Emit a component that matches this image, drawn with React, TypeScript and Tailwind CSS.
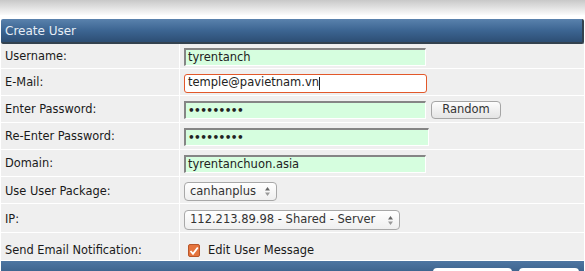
import React from "react"

const font = { fontFamily: '"DejaVu Sans", Verdana, sans-serif' }

function Row({
  label,
  children,
  h = "h-[26px]",
  pt = "pt-[2px]",
}: {
  label: string
  children: React.ReactNode
  h?: string
  pt?: string
}) {
  return (
    <div className={`flex ${h} border-b border-white`}>
      <div className={`w-[179px] shrink-0 border-r border-white pl-[4px] ${pt} flex items-center text-[11.4px] text-[#1a1a1a]`}>
        {label}
      </div>
      <div className={`flex-1 flex items-center pl-[4px] ${pt} gap-[5px]`}>{children}</div>
    </div>
  )
}

function GreenInput({ value, w = "w-[242px]", dots = false }: { value: string; w?: string; dots?: boolean }) {
  return (
    <div
      className={`${w} h-[18px] bg-[#d6fedf] border-t-[2px] border-l-[2px] border-[#858585] border-r border-b border-r-white border-b-white flex items-center pl-[2px] ${dots ? "text-[10.5px] font-bold tracking-[-0.6px]" : "text-[11.5px]"} text-[#222]`}
    >
      {value}
    </div>
  )
}

function Arrows() {
  return (
    <svg width="7" height="11" viewBox="0 0 7 11" className="ml-auto mr-[5px]">
      <path d="M3.5 1 L6 4.5 H1 Z" fill="#666" />
      <path d="M3.5 10 L6 6.5 H1 Z" fill="#999" />
    </svg>
  )
}

export default function App() {
  return (
    <div className="w-[585px] h-[271px] bg-white overflow-hidden" style={font}>
      <div className="h-[15px] bg-gradient-to-b from-[#c8c8c8] to-[#fbfbfb]" />
      <div className="h-[4px] bg-white" />
      <div className="mx-[1px] h-[25px] rounded-[2px] bg-gradient-to-b from-[#5a82ad] via-[#3c6592] to-[#2d4e74] border-b-2 border-r-2 border-[#33424f] flex items-center pl-[4px] text-[12px] text-[#e6edf5]">
        Create User
      </div>
      <div className="mx-[1px] bg-[#efefef]">
        <Row label="Username:" h="h-[25px]">
          <GreenInput value="tyrentanch" />
        </Row>
        <Row label="E-Mail:" h="h-[27px]">
          <div className="w-[243px] h-[19px] bg-white border border-[#e2582a] rounded-[3px] flex items-center pl-[3px] text-[11.5px] text-[#222]">
            temple@pavietnam.vn<span className="inline-block w-px h-[13px] bg-[#222]" />
          </div>
        </Row>
        <Row label="Enter Password:" h="h-[27px]">
          <GreenInput value="•••••••••" dots />
          <div className="w-[70px] h-[18px] rounded-[4px] border border-[#a5a5a5] bg-gradient-to-b from-[#fdfdfd] to-[#e4e4e4] flex items-center justify-center text-[11.5px] text-[#333]">
            Random
          </div>
        </Row>
        <Row label="Re-Enter Password:" h="h-[27px]">
          <GreenInput value="•••••••••" w="w-[245px]" dots />
        </Row>
        <Row label="Domain:" h="h-[27px]">
          <GreenInput value="tyrentanchuon.asia" />
        </Row>
        <Row label="Use User Package:" h="h-[27px]" pt="pt-[3px]">
          <div className="w-[93px] h-[19px] rounded-[4px] border border-[#a8a8a8] bg-gradient-to-b from-white to-[#efefef] flex items-center pl-[5px] text-[11.5px] text-[#333]">
            canhanplus
            <Arrows />
          </div>
        </Row>
        <Row label="IP:" h="h-[29px]" pt="pt-[4px]">
          <div className="w-[216px] h-[20px] rounded-[4px] border border-[#a8a8a8] bg-gradient-to-b from-white to-[#efefef] flex items-center pl-[5px] text-[11.5px] text-[#333]">
            112.213.89.98 - Shared - Server
            <Arrows />
          </div>
        </Row>
        <Row label="Send Email Notification:" h="h-[28px]" pt="pt-[8px]">
          <div className="flex items-center gap-[8px] pl-[4px]">
            <div className="w-[12px] h-[13px] rounded-[2px] bg-[#e5743d] border border-[#b8562a] flex items-center justify-center">
              <svg width="10" height="10" viewBox="0 0 10 10">
                <path d="M1.5 5 L4 7.8 L8.8 1.5" stroke="white" strokeWidth="1.8" fill="none" />
              </svg>
            </div>
            <span className="text-[11.5px] text-[#1a1a1a]">Edit User Message</span>
          </div>
        </Row>
      </div>
      <div className="mx-[1px] h-[10px] bg-gradient-to-b from-[#4e76a2] to-[#3f658f] relative">
        <div className="absolute left-[432px] top-[7px] w-[79px] h-[8px] bg-white rounded-t-[4px]" />
        <div className="absolute left-[518px] top-[7px] w-[60px] h-[8px] bg-white rounded-t-[4px]" />
      </div>
    </div>
  )
}
